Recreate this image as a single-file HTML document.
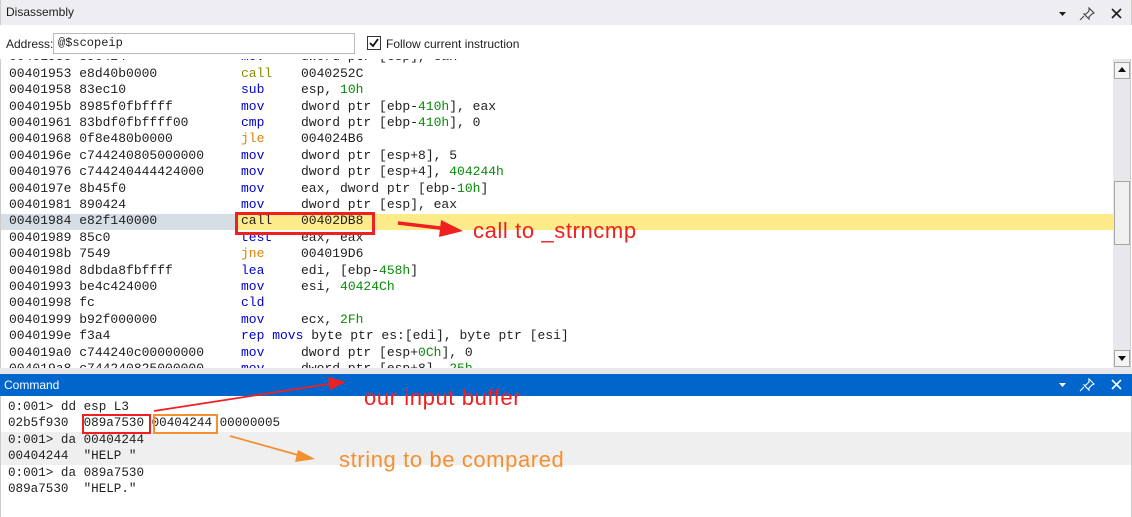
<!DOCTYPE html>
<html><head><style>
*{margin:0;padding:0;box-sizing:border-box}
body{width:1132px;height:517px;background:#fff;position:relative;overflow:hidden;font-family:"Liberation Sans",sans-serif}
.mono{font-family:"Liberation Mono","DejaVu Sans Mono",monospace;font-size:13px;color:#1e1e1e}
.ln{position:absolute;left:8px;height:16.4px;line-height:16.4px;white-space:pre;width:1105px}
.ln i{font-style:normal;position:absolute;left:232px;top:0}
.ln u{text-decoration:none;position:absolute;left:292px;top:0}
.b{color:#0000d0}.o{color:#e08000}.y{color:#8a8a00}.g{color:#098a09}
.t{position:absolute;white-space:pre}
.ann{font-size:22px;letter-spacing:0.6px}
</style></head><body>
<div style="position:absolute;left:0;top:0;width:1132px;height:25px;background:#eeeef2;border-left:1px solid #ccc;border-right:1px solid #ccc"></div>
<div class="t" style="left:6px;top:5px;font-size:12px;color:#1e1e1e">Disassembly</div>
<svg style="position:absolute;left:1055px;top:6px" width="70" height="16">
<path d="M4 6h7l-3.5 4z" fill="#1e1e1e"/>
<path d="M34 2l5 5-2 1-3 3 0 2-5-5 2 0 3-3z M29 10l-4 4" stroke="#444" stroke-width="1.1" fill="none"/>
<path d="M57 3l9 9M66 3l-9 9" stroke="#1e1e1e" stroke-width="1.6"/>
</svg>
<div class="t" style="left:6px;top:37px;font-size:12px;color:#1e1e1e">Address:</div>
<div style="position:absolute;left:53px;top:33px;width:302px;height:21px;border:1px solid #bbb;background:#fff"></div>
<div class="t mono" style="left:58px;top:36px;font-size:12px">@$scopeip</div>
<div style="position:absolute;left:367px;top:36px;width:14px;height:14px;border:1px solid #333;background:#fff"></div>
<svg style="position:absolute;left:368px;top:37px" width="12" height="12"><path d="M2 6l3 3 5-7" stroke="#111" stroke-width="1.8" fill="none"/></svg>
<div class="t" style="left:386px;top:37px;font-size:12px;color:#1e1e1e">Follow current instruction</div>
<div style="position:absolute;left:0;top:59px;width:1113px;height:309px;overflow:hidden;border-left:1px solid #ccc">
<div style="position:absolute;left:0;top:155px;width:235px;height:16.4px;background:#d5dde5"></div>
<div style="position:absolute;left:235px;top:155px;width:878px;height:16.4px;background:#fdeb8a"></div>
<div class="mono" style="position:absolute;left:0;top:-9.6px">
<div class="ln" style="top:0">00401950 890424<i class="b">mov</i><u>dword ptr [esp], eax</u></div>
<div class="ln" style="top:16.4px">00401953 e8d40b0000<i class="y">call</i><u>0040252C</u></div>
<div class="ln" style="top:32.8px">00401958 83ec10<i class="b">sub</i><u>esp, <span class="g">10h</span></u></div>
<div class="ln" style="top:49.2px">0040195b 8985f0fbffff<i class="b">mov</i><u>dword ptr [ebp-<span class="g">410h</span>], eax</u></div>
<div class="ln" style="top:65.6px">00401961 83bdf0fbffff00<i class="b">cmp</i><u>dword ptr [ebp-<span class="g">410h</span>], 0</u></div>
<div class="ln" style="top:82px">00401968 0f8e480b0000<i class="o">jle</i><u>004024B6</u></div>
<div class="ln" style="top:98.4px">0040196e c744240805000000<i class="b">mov</i><u>dword ptr [esp+8], 5</u></div>
<div class="ln" style="top:114.8px">00401976 c744240444424000<i class="b">mov</i><u>dword ptr [esp+4], <span class="g">404244h</span></u></div>
<div class="ln" style="top:131.2px">0040197e 8b45f0<i class="b">mov</i><u>eax, dword ptr [ebp-<span class="g">10h</span>]</u></div>
<div class="ln" style="top:147.6px">00401981 890424<i class="b">mov</i><u>dword ptr [esp], eax</u></div>
<div class="ln" style="top:164px">00401984 e82f140000<i>call</i><u>00402DB8</u></div>
<div class="ln" style="top:180.4px">00401989 85c0<i class="b">test</i><u>eax, eax</u></div>
<div class="ln" style="top:196.8px">0040198b 7549<i class="o">jne</i><u>004019D6</u></div>
<div class="ln" style="top:213.2px">0040198d 8dbda8fbffff<i class="b">lea</i><u>edi, [ebp-<span class="g">458h</span>]</u></div>
<div class="ln" style="top:229.6px">00401993 be4c424000<i class="b">mov</i><u>esi, <span class="g">40424Ch</span></u></div>
<div class="ln" style="top:246px">00401998 fc<i class="b">cld</i></div>
<div class="ln" style="top:262.4px">00401999 b92f000000<i class="b">mov</i><u>ecx, <span class="g">2Fh</span></u></div>
<div class="ln" style="top:278.8px">0040199e f3a4<i><span class="b">rep movs</span> byte ptr es:[edi], byte ptr [esi]</i></div>
<div class="ln" style="top:295.2px">004019a0 c744240c00000000<i class="b">mov</i><u>dword ptr [esp+<span class="g">0Ch</span>], 0</u></div>
<div class="ln" style="top:311.6px">004019a8 c744240825000000<i class="b">mov</i><u>dword ptr [esp+8], <span class="g">25h</span></u></div>
</div>
</div>
<div style="position:absolute;left:235px;top:212px;width:140px;height:23px;border:3px solid #f02020"></div>
<svg style="position:absolute;left:395px;top:212px" width="80" height="30"><path d="M3 11l50 6" stroke="#f02020" stroke-width="3.5"/><path d="M46 8l22 11-24 6z" fill="#f02020"/></svg>
<div class="t ann" style="left:473px;top:218px;color:#f02020">call to _strncmp</div>
<div style="position:absolute;left:1113px;top:59px;width:18px;height:310px;background:#e8e8ec;border-right:1px solid #ccc"></div>
<div style="position:absolute;left:1114px;top:62px;width:16px;height:17px;border:1px solid #a8a8a0;background:#f4f4f4"></div>
<svg style="position:absolute;left:1118px;top:67px" width="8" height="6"><path d="M0 5h8L4 0z" fill="#111"/></svg>
<div style="position:absolute;left:1114px;top:181px;width:16px;height:64px;border:1px solid #a8a8a0;background:#f0f0f0"></div>
<div style="position:absolute;left:1114px;top:350px;width:16px;height:17px;border:1px solid #a8a8a0;background:#f4f4f4"></div>
<svg style="position:absolute;left:1118px;top:356px" width="8" height="6"><path d="M0 0h8L4 5z" fill="#111"/></svg>
<div style="position:absolute;left:0;top:368px;width:1132px;height:6px;background:#e8e8ec"></div>
<div style="position:absolute;left:0;top:374px;width:1132px;height:22px;background:#0066cc"></div>
<div class="t" style="left:4px;top:378px;font-size:12px;color:#fff">Command</div>
<svg style="position:absolute;left:1055px;top:377px" width="70" height="16">
<path d="M4 6h7l-3.5 4z" fill="#fff"/>
<path d="M34 2l5 5-2 1-3 3 0 2-5-5 2 0 3-3z M29 10l-4 4" stroke="#fff" stroke-width="1.1" fill="none"/>
<path d="M57 3l9 9M66 3l-9 9" stroke="#fff" stroke-width="1.6"/>
</svg>
<div style="position:absolute;left:0;top:396px;width:1132px;height:121px;border-left:1px solid #ccc;border-right:1px solid #ccc"></div>
<div style="position:absolute;left:1px;top:432px;width:1130px;height:33px;background:#efefef"></div>
<div class="mono" style="position:absolute;left:0;top:399px;font-size:12.6px">
<div class="ln" style="top:0">0:001&gt; dd esp L3</div>
<div class="ln" style="top:16.4px">02b5f930  089a7530 00404244 00000005</div>
<div class="ln" style="top:32.8px">0:001&gt; da 00404244</div>
<div class="ln" style="top:49.2px">00404244  "HELP "</div>
<div class="ln" style="top:65.6px">0:001&gt; da 089a7530</div>
<div class="ln" style="top:82px">089a7530  "HELP."</div>
</div>
<div style="position:absolute;left:82px;top:414px;width:69px;height:20px;border:2px solid #f02020"></div>
<div style="position:absolute;left:153px;top:414px;width:65px;height:20px;border:2px solid #f39030"></div>
<svg style="position:absolute;left:0;top:370px;overflow:visible" width="400" height="100">
<path d="M154 41L335 13" stroke="#f02020" stroke-width="1.8"/><path d="M328 7l18 5-16 8z" fill="#f02020"/>
<path d="M230 66L305 87" stroke="#f39030" stroke-width="1.8"/><path d="M298 80l17 9-20 3z" fill="#f39030"/>
</svg>
<div class="t ann" style="left:364px;top:385px;color:#f02020">our input buffer</div>
<div class="t ann" style="left:339px;top:447px;color:#f39030">string to be compared</div>
</body></html>
